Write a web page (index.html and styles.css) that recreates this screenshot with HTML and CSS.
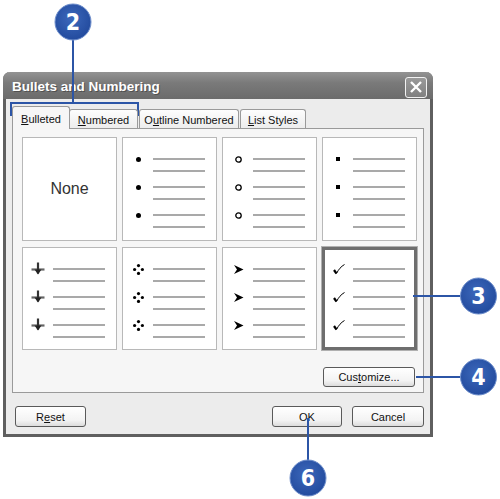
FILE: index.html
```html
<!DOCTYPE html>
<html lang="en">
<head>
  <meta charset="UTF-8">
  <title>Bullets and Numbering</title>
  <link rel="stylesheet" href="styles.css">
</head>
<body>
  <div class="figure">

    <div class="dialog">
      <div class="titlebar">
        <span class="title">Bullets and Numbering</span>
        <span class="close">
          <svg width="14" height="14" viewBox="0 0 14 14"><path d="M2 2L12 12M12 2L2 12" stroke="#fff" stroke-width="2.4"/></svg>
        </span>
      </div>

      <div class="dialog-body">
        <div class="tabs">
          <div class="tab active"><u>B</u>ulleted</div>
          <div class="tab"><u>N</u>umbered</div>
          <div class="tab">O<u>u</u>tline Numbered</div>
          <div class="tab"><u>L</u>ist Styles</div>
        </div>

        <div class="panel">
          <div class="gallery">
            <div class="cell none">None</div>

            <div class="cell">
              <div class="item"><span class="mark"><svg width="5" height="5"><circle cx="2.5" cy="2.5" r="2.5"/></svg></span><span class="lines"><i></i><i></i></span></div>
              <div class="item"><span class="mark"><svg width="5" height="5"><circle cx="2.5" cy="2.5" r="2.5"/></svg></span><span class="lines"><i></i><i></i></span></div>
              <div class="item"><span class="mark"><svg width="5" height="5"><circle cx="2.5" cy="2.5" r="2.5"/></svg></span><span class="lines"><i></i><i></i></span></div>
            </div>

            <div class="cell">
              <div class="item"><span class="mark"><svg width="7" height="7"><circle cx="3.5" cy="3.5" r="2.7" fill="none" stroke="#000" stroke-width="1.3"/></svg></span><span class="lines"><i></i><i></i></span></div>
              <div class="item"><span class="mark"><svg width="7" height="7"><circle cx="3.5" cy="3.5" r="2.7" fill="none" stroke="#000" stroke-width="1.3"/></svg></span><span class="lines"><i></i><i></i></span></div>
              <div class="item"><span class="mark"><svg width="7" height="7"><circle cx="3.5" cy="3.5" r="2.7" fill="none" stroke="#000" stroke-width="1.3"/></svg></span><span class="lines"><i></i><i></i></span></div>
            </div>

            <div class="cell">
              <div class="item"><span class="mark"><svg width="4" height="4"><rect width="4" height="4"/></svg></span><span class="lines"><i></i><i></i></span></div>
              <div class="item"><span class="mark"><svg width="4" height="4"><rect width="4" height="4"/></svg></span><span class="lines"><i></i><i></i></span></div>
              <div class="item"><span class="mark"><svg width="4" height="4"><rect width="4" height="4"/></svg></span><span class="lines"><i></i><i></i></span></div>
            </div>

            <div class="cell">
              <div class="item"><span class="mark"><svg width="14" height="14" viewBox="0 0 14 14"><path d="M0.5 7.5h13" stroke="#666" stroke-width="2.2"/><path d="M7 0.5v11" stroke="#333" stroke-width="2.2"/><path d="M3.5 7.5l3.5 5 3.5-5z" fill="#222"/></svg></span><span class="lines"><i></i><i></i></span></div>
              <div class="item"><span class="mark"><svg width="14" height="14" viewBox="0 0 14 14"><path d="M0.5 7.5h13" stroke="#666" stroke-width="2.2"/><path d="M7 0.5v11" stroke="#333" stroke-width="2.2"/><path d="M3.5 7.5l3.5 5 3.5-5z" fill="#222"/></svg></span><span class="lines"><i></i><i></i></span></div>
              <div class="item"><span class="mark"><svg width="14" height="14" viewBox="0 0 14 14"><path d="M0.5 7.5h13" stroke="#666" stroke-width="2.2"/><path d="M7 0.5v11" stroke="#333" stroke-width="2.2"/><path d="M3.5 7.5l3.5 5 3.5-5z" fill="#222"/></svg></span><span class="lines"><i></i><i></i></span></div>
            </div>

            <div class="cell">
              <div class="item"><span class="mark"><svg width="11" height="11" viewBox="0 0 11 11"><circle cx="5.5" cy="1.6" r="1.6"/><circle cx="5.5" cy="9.4" r="1.6"/><circle cx="1.6" cy="5.5" r="1.6"/><circle cx="9.4" cy="5.5" r="1.6"/></svg></span><span class="lines"><i></i><i></i></span></div>
              <div class="item"><span class="mark"><svg width="11" height="11" viewBox="0 0 11 11"><circle cx="5.5" cy="1.6" r="1.6"/><circle cx="5.5" cy="9.4" r="1.6"/><circle cx="1.6" cy="5.5" r="1.6"/><circle cx="9.4" cy="5.5" r="1.6"/></svg></span><span class="lines"><i></i><i></i></span></div>
              <div class="item"><span class="mark"><svg width="11" height="11" viewBox="0 0 11 11"><circle cx="5.5" cy="1.6" r="1.6"/><circle cx="5.5" cy="9.4" r="1.6"/><circle cx="1.6" cy="5.5" r="1.6"/><circle cx="9.4" cy="5.5" r="1.6"/></svg></span><span class="lines"><i></i><i></i></span></div>
            </div>

            <div class="cell">
              <div class="item"><span class="mark"><svg width="11" height="11" viewBox="0 0 11 11"><path d="M1 1l9.5 4.5L1 10l3-4.5z" fill="#000"/></svg></span><span class="lines"><i></i><i></i></span></div>
              <div class="item"><span class="mark"><svg width="11" height="11" viewBox="0 0 11 11"><path d="M1 1l9.5 4.5L1 10l3-4.5z" fill="#000"/></svg></span><span class="lines"><i></i><i></i></span></div>
              <div class="item"><span class="mark"><svg width="11" height="11" viewBox="0 0 11 11"><path d="M1 1l9.5 4.5L1 10l3-4.5z" fill="#000"/></svg></span><span class="lines"><i></i><i></i></span></div>
            </div>

            <div class="cell selected">
              <div class="item"><span class="mark"><svg width="12" height="11" viewBox="0 0 12 11"><path d="M1 6l2.5 3.5" stroke="#000" stroke-width="2.2"/><path d="M3.5 9.5C5.5 5.5 8 2.5 11.5 0.5" stroke="#000" stroke-width="1" fill="none"/></svg></span><span class="lines"><i></i><i></i></span></div>
              <div class="item"><span class="mark"><svg width="12" height="11" viewBox="0 0 12 11"><path d="M1 6l2.5 3.5" stroke="#000" stroke-width="2.2"/><path d="M3.5 9.5C5.5 5.5 8 2.5 11.5 0.5" stroke="#000" stroke-width="1" fill="none"/></svg></span><span class="lines"><i></i><i></i></span></div>
              <div class="item"><span class="mark"><svg width="12" height="11" viewBox="0 0 12 11"><path d="M1 6l2.5 3.5" stroke="#000" stroke-width="2.2"/><path d="M3.5 9.5C5.5 5.5 8 2.5 11.5 0.5" stroke="#000" stroke-width="1" fill="none"/></svg></span><span class="lines"><i></i><i></i></span></div>
            </div>
          </div>

          <div class="panel-actions">
            <button class="btn customize">Cus<u>t</u>omize...</button>
          </div>
        </div>

        <div class="footer">
          <button class="btn reset">R<u>e</u>set</button>
          <button class="btn ok">OK</button>
          <button class="btn cancel">Cancel</button>
        </div>
      </div>
    </div>

    <!-- numbered callouts drawn over the screenshot -->
    <svg class="callouts" width="500" height="499" viewBox="0 0 500 499">
      <defs>
        <radialGradient id="dot" cx="45%" cy="40%" r="60%">
          <stop offset="0" stop-color="#3c68bb"/>
          <stop offset="1" stop-color="#234b9e"/>
        </radialGradient>
      </defs>
      <g stroke="#2c55a6" stroke-width="2" fill="none">
        <path d="M73 40V103"/>
        <path d="M11 116V103H138V116"/>
        <path d="M413 296H461"/>
        <path d="M416 377H461"/>
        <path d="M308 418V461"/>
      </g>
      <g fill="url(#dot)" stroke="#6f8fcc" stroke-width="1">
        <circle cx="73" cy="22" r="18"/>
        <circle cx="478.5" cy="296" r="18"/>
        <circle cx="478.5" cy="377" r="18"/>
        <circle cx="308" cy="478" r="18"/>
      </g>
      <g class="num">
        <text x="73" y="30">2</text>
        <text x="478.5" y="304">3</text>
        <text x="478.5" y="385">4</text>
        <text x="308" y="486">6</text>
      </g>
    </svg>

  </div>
</body>
</html>
```

FILE: styles.css
```css
body {
  margin: 0;
  background: #fff;
  font-family: "Liberation Sans", Arial, sans-serif;
  font-size: 11px;
  color: #000;
}
.figure {
  position: relative;
  width: 500px;
  height: 499px;
  padding: 72px 0 0 3px;
  box-sizing: border-box;
  overflow: hidden;
}

/* dialog window */
.dialog {
  width: 430px;
  height: 365px;
  box-sizing: border-box;
  border: 3px solid #5f5f5f;
  border-top: none;
  border-radius: 7px 7px 0 0;
  background: #ececec;
  display: flex;
  flex-direction: column;
}
.titlebar {
  height: 27px;
  margin: 0 -3px;
  padding: 0 6px 0 9px;
  border-radius: 7px 7px 0 0;
  background: linear-gradient(#939393, #7a7a7a 40%, #6b6b6b);
  display: flex;
  align-items: center;
  justify-content: space-between;
}
.title {
  color: #fff;
  font-weight: bold;
  font-size: 13.5px;
  text-shadow: 1px 1px 0 #505050;
  padding-top: 1px;
}
.close {
  width: 20px;
  height: 19px;
  margin-top: 3px;
  border: 1px solid #f2f2f2;
  border-radius: 3px;
  background: linear-gradient(#9a9a9a, #808080);
  display: flex;
  align-items: center;
  justify-content: center;
}
.dialog-body {
  padding: 7px 6px 0 6px;
  display: flex;
  flex-direction: column;
}

/* tabs */
.tabs {
  display: flex;
  height: 22px;
  align-items: flex-end;
  position: relative;
  z-index: 1;
}
.tab {
  height: 19px;
  box-sizing: border-box;
  padding: 4px 0 0;
  text-align: center;
  border: 1px solid #9a9a9a;
  border-bottom: none;
  border-radius: 3px 3px 0 0;
  background: linear-gradient(#fdfdfd, #ededed);
  color: #111;
}
.tab:nth-child(1) { width: 58px; }
.tab:nth-child(2) { width: 69px; margin-left: -1px; }
.tab:nth-child(3) { width: 100px; margin-left: 1px; }
.tab:nth-child(4) { width: 66px; margin-left: 1px; }
.tab.active {
  height: 23px;
  margin-bottom: -1px;
  padding-top: 6px;
  background: #f6f6f6;
}

/* tab page */
.panel {
  height: 265px;
  box-sizing: border-box;
  border: 1px solid #9a9a9a;
  background: #f6f6f6;
  padding: 8px 0 0 9px;
}
.gallery {
  display: grid;
  grid-template-columns: repeat(4, 95px);
  grid-template-rows: 104px 103px;
  column-gap: 5px;
  row-gap: 6px;
}
.cell {
  box-sizing: border-box;
  border: 1px solid #b8b8b8;
  background: #fff;
  padding-top: 20px;
}
.cell.none {
  padding: 0;
  display: flex;
  align-items: center;
  justify-content: center;
  font-size: 16px;
  color: #333;
}
.cell.selected {
  border: 3px solid #6e6e6e;
  outline: 1px solid #b0b0b0;
  padding-top: 18px;
}
.item {
  display: grid;
  grid-template-columns: 30px 52px;
  height: 28px;
}
.cell.selected .item {
  grid-template-columns: 28px 52px;
}
.mark {
  height: 2px;
  display: flex;
  align-items: center;
  justify-content: center;
}
.mark svg { flex: none; display: block; }
.lines {
  display: flex;
  flex-direction: column;
  gap: 10px;
}
.lines i {
  display: block;
  height: 2px;
  background: #a9a9a9;
}

/* buttons */
.btn {
  height: 20px;
  box-sizing: border-box;
  padding: 0;
  border: 1px solid #5a5a5a;
  border-radius: 3px;
  background: linear-gradient(#ffffff, #f3f3f3 70%, #dcdcdc);
  font-family: "Liberation Sans", Arial, sans-serif;
  font-size: 11px;
  color: #111;
}
.panel-actions {
  display: flex;
  justify-content: flex-end;
  margin: 17px 8px 0 0;
}
.customize { width: 92px; }
.footer {
  display: flex;
  margin-top: 13px;
  gap: 10px;
}
.footer .btn { height: 21px; }
.reset { width: 71px; margin-left: 3px; margin-right: auto; }
.ok { width: 70px; }
.cancel { width: 72px; }

/* callouts */
.callouts {
  position: absolute;
  top: 0;
  left: 0;
}
.num text {
  fill: #fff;
  font-family: "Liberation Sans Narrow", "DejaVu Sans Condensed", "DejaVu Sans", sans-serif;
  font-weight: bold;
  font-size: 23px;
  text-anchor: middle;
}
```
